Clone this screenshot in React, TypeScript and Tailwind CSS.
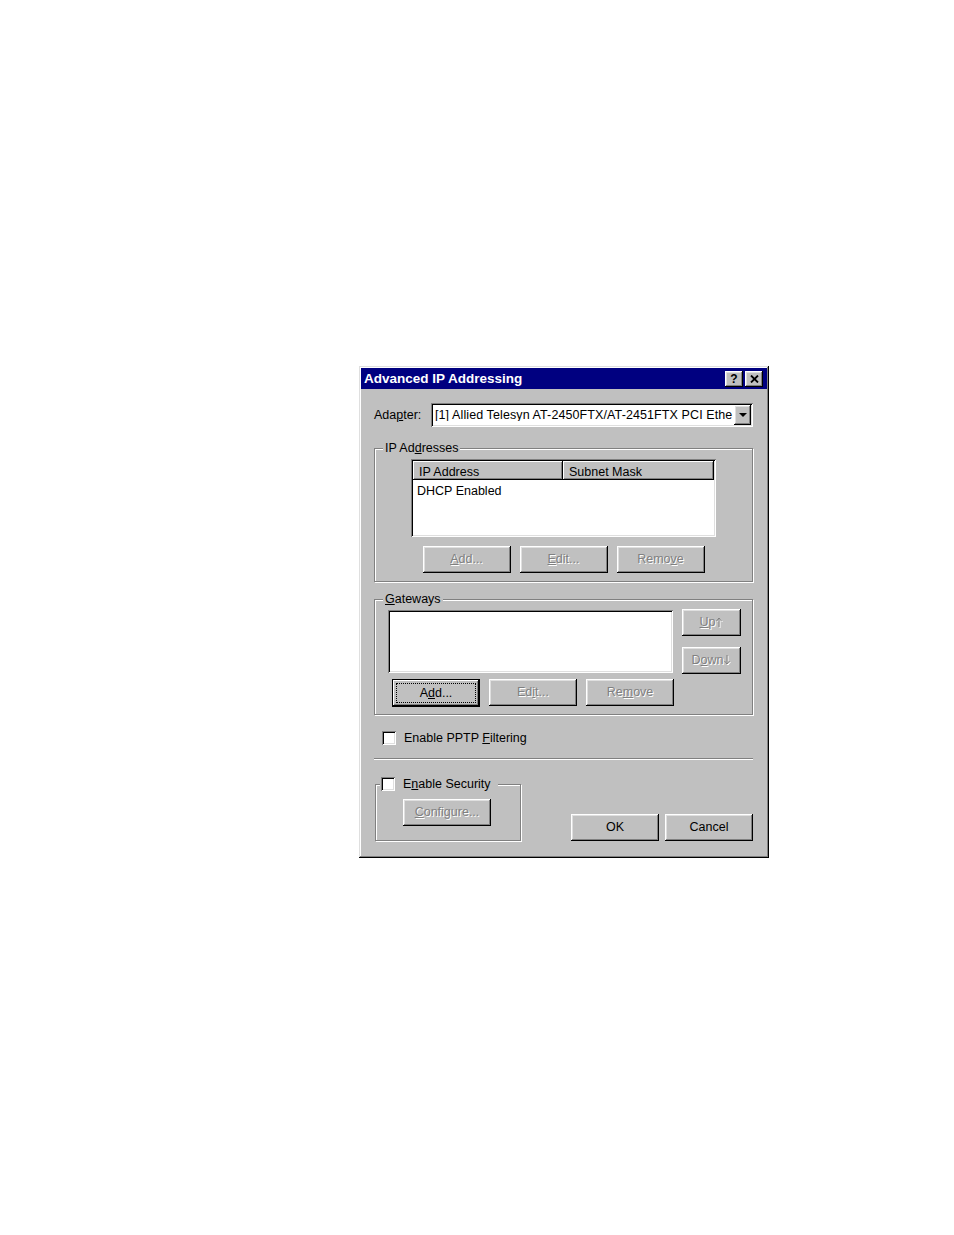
import React from "react";

const raised =
  "bg-[#c0c0c0] shadow-[inset_-1px_-1px_0_#000,inset_1px_1px_0_#fff,inset_-2px_-2px_0_#808080,inset_2px_2px_0_#dfdfdf]";
const sunken =
  "bg-white shadow-[inset_1px_1px_0_#808080,inset_-1px_-1px_0_#fff,inset_2px_2px_0_#000,inset_-2px_-2px_0_#dfdfdf]";
const etched =
  "border border-[#808080] shadow-[inset_1px_1px_0_#fff,1px_1px_0_#fff]";
const disabledText = "text-[#808080] [text-shadow:1px_1px_0_#fff]";
const header =
  "bg-[#c0c0c0] shadow-[inset_-1px_-1px_0_#000,inset_1px_1px_0_#fff,inset_-2px_-2px_0_#808080]";

type BtnProps = {
  children: React.ReactNode;
  w?: string;
  disabled?: boolean;
  def?: boolean;
};

function Btn({ children, w = "w-[88px]", disabled, def }: BtnProps) {
  if (def) {
    return (
      <div
        className={`${w} h-[28px] p-[4px] flex bg-[#c0c0c0] shadow-[inset_0_0_0_1px_#000,inset_-2px_-2px_0_#000,inset_2px_2px_0_#fff,inset_-3px_-3px_0_#808080]`}
      >
        <div className="flex-1 border border-dotted border-black flex items-center justify-center leading-none text-black">
          {children}
        </div>
      </div>
    );
  }
  return (
    <div
      className={`${w} h-[27px] ${raised} flex items-center justify-center leading-none ${
        disabled ? disabledText : "text-black"
      }`}
    >
      {children}
    </div>
  );
}

function Arrow({ down }: { down?: boolean }) {
  const d = down ? "M3 0 V9 M0.5 6 L3 9 L5.5 6" : "M3 10 V1 M0.5 4 L3 1 L5.5 4";
  return (
    <svg width="7" height="11" viewBox="0 0 7 11" className="ml-[1px]">
      <path d={d} transform="translate(1 1)" stroke="#fff" strokeWidth="1" fill="none" />
      <path d={d} stroke="#808080" strokeWidth="1" fill="none" />
    </svg>
  );
}

function Check() {
  return <div className={`w-[14px] h-[14px] shrink-0 ${sunken}`} />;
}

export default function App() {
  return (
    <div className="w-[954px] h-[1235px] bg-white pt-[366px] pl-[359px] font-['Liberation_Sans',Arial,sans-serif] text-[12.5px] text-black">
      <div className="w-[410px] h-[492px] bg-[#c0c0c0] p-[2px] flex flex-col shadow-[inset_-1px_-1px_0_#000,inset_1px_1px_0_#dfdfdf,inset_-2px_-2px_0_#808080,inset_2px_2px_0_#fff]">
        {/* Title bar */}
        <div className="h-[21px] bg-[#000080] flex items-center justify-between pl-[3px] pr-[4px]">
          <span className="text-white font-bold text-[13.5px] leading-none">
            Advanced IP Addressing
          </span>
          <div className="flex gap-[2px]">
            <div
              className={`w-[18px] h-[16px] ${raised} flex items-center justify-center font-bold text-[12px] leading-none`}
            >
              ?
            </div>
            <div
              className={`w-[18px] h-[16px] ${raised} flex items-center justify-center`}
            >
              <svg width="9" height="8" viewBox="0 0 9 8">
                <path
                  d="M1 0.5 L8 7.5 M8 0.5 L1 7.5"
                  stroke="#000"
                  strokeWidth="1.8"
                  fill="none"
                />
              </svg>
            </div>
          </div>
        </div>

        {/* Body */}
        <div className="flex flex-col pl-[13px] pr-[14px] pt-[14px]">
          {/* Adapter */}
          <div className="flex items-center h-[24px]">
            <span className="w-[57px] leading-none">
              Ada<u>p</u>ter:
            </span>
            <div className={`w-[322px] h-[24px] ${sunken} flex items-center p-[2px]`}>
              <span className="flex-1 overflow-hidden whitespace-nowrap pl-[2px] leading-none tracking-[0.1px]">
                [1] Allied Telesyn AT-2450FTX/AT-2451FTX PCI Ethe
              </span>
              <div className={`w-[17px] h-[20px] shrink-0 ${raised} flex items-center justify-center`}>
                <svg width="8" height="4" viewBox="0 0 8 4">
                  <polygon points="0,0 8,0 4,4" fill="#000" />
                </svg>
              </div>
            </div>
          </div>

          {/* IP Addresses */}
          <div className={`relative mt-[21px] h-[134px] ${etched} pt-[10px] flex flex-col items-center`}>
            <span className="absolute -top-[9px] left-[8px] px-[2px] bg-[#c0c0c0] leading-[16px]">
              IP Ad<u>d</u>resses
            </span>
            <div className={`w-[305px] h-[78px] ${sunken} p-[2px] flex flex-col`}>
              <div className="flex h-[19px]">
                <div className={`w-[150px] ${header} pl-[6px] pt-[3px] flex items-center leading-none`}>
                  IP Address
                </div>
                <div className={`w-[151px] ${header} pl-[6px] pt-[3px] flex items-center leading-none`}>
                  Subnet Mask
                </div>
              </div>
              <div className="pl-[4px] pt-[3px] leading-[16px]">DHCP Enabled</div>
            </div>
            <div className="flex gap-[9px] mt-[9px]">
              <Btn disabled>
                <span>
                  <u>A</u>dd...
                </span>
              </Btn>
              <Btn disabled>
                <span>
                  <u>E</u>dit...
                </span>
              </Btn>
              <Btn disabled>
                <span>
                  Remo<u>v</u>e
                </span>
              </Btn>
            </div>
          </div>

          {/* Gateways */}
          <div className={`relative mt-[17px] h-[116px] ${etched} pl-[13px] pt-[9px] flex flex-col`}>
            <span className="absolute -top-[9px] left-[8px] px-[2px] bg-[#c0c0c0] leading-[16px]">
              <u>G</u>ateways
            </span>
            <div className="flex items-start">
              <div className={`w-[285px] h-[63px] mt-px ${sunken}`} />
              <div className="ml-[9px] flex flex-col gap-[11px]">
                <Btn w="w-[59px]" disabled>
                  <span>
                    <u>U</u>p
                  </span>
                  <Arrow />
                </Btn>
                <Btn w="w-[59px]" disabled>
                  <span>
                    D<u>o</u>wn
                  </span>
                  <Arrow down />
                </Btn>
              </div>
            </div>
            <div className="flex gap-[9px] ml-[4px] mt-[5px]">
              <Btn def>
                <span>
                  A<u>d</u>d...
                </span>
              </Btn>
              <Btn disabled>
                <span>
                  Ed<u>i</u>t...
                </span>
              </Btn>
              <Btn disabled>
                <span>
                  Re<u>m</u>ove
                </span>
              </Btn>
            </div>
          </div>

          {/* PPTP */}
          <div className="mt-[15px] h-[16px] flex items-center pl-[8px] gap-[8px]">
            <Check />
            <span className="leading-none">
              Enable PPTP <u>F</u>iltering
            </span>
          </div>

          {/* Separator */}
          <div className="mt-[12px] border-t border-b border-t-[#808080] border-b-white" />

          {/* Bottom */}
          <div className="mt-[24px] flex items-end justify-between">
            <div className={`relative ml-px w-[146px] h-[57px] ${etched} pl-[27px] pt-[14px]`}>
              <div className="absolute -top-[9px] left-[4px] h-[16px] pl-px pr-[7px] bg-[#c0c0c0] flex items-center gap-[8px]">
                <Check />
                <span className="leading-none">
                  E<u>n</u>able Security
                </span>
              </div>
              <Btn disabled>
                <span>
                  <u>C</u>onfigure...
                </span>
              </Btn>
            </div>
            <div className="flex gap-[6px]">
              <Btn>OK</Btn>
              <Btn>Cancel</Btn>
            </div>
          </div>
        </div>
      </div>
    </div>
  );
}
